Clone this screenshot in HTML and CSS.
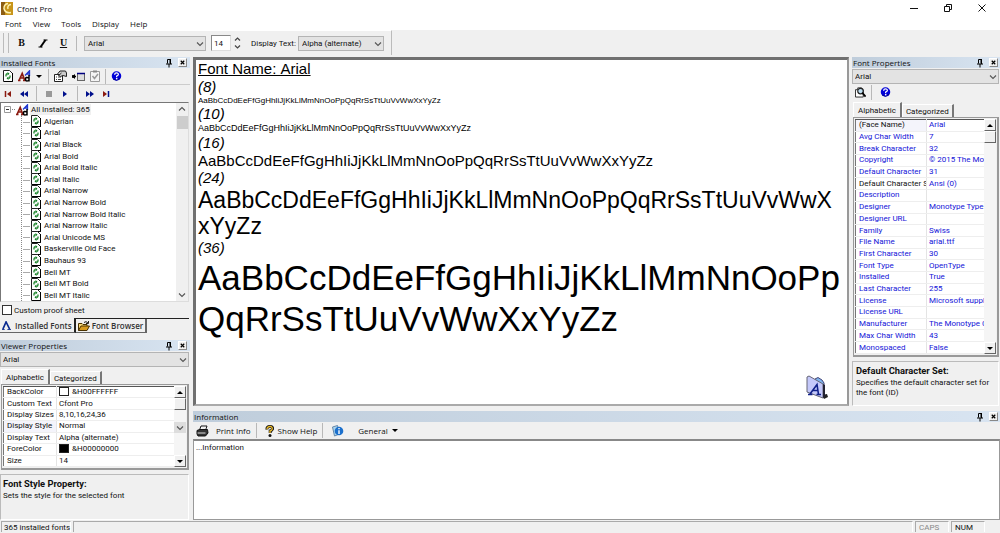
FILE: index.html
```html
<!DOCTYPE html>
<html lang="en">
<head>
<meta charset="utf-8">
<title>Cfont Pro</title>
<link rel="stylesheet" href="styles.css">
</head>
<body>
<svg class="defs" aria-hidden="true">
  <symbol id="chev" viewBox="0 0 8 8"><path d="M1 2.5L4 5.5L7 2.5" fill="none" stroke="#555" stroke-width="1.1"/></symbol>
  <symbol id="pin" viewBox="0 0 6 10"><path d="M1.5 5.500V1.500H4V5.500M0 6H6M3 6V9.500M4.500 1V6" fill="none" stroke="#000"/></symbol>
  <symbol id="x" viewBox="0 0 8 8"><path d="M2 2L6 6M6 2L2 6" stroke="#000" stroke-width="1.4"/></symbol>
  <symbol id="doc" viewBox="0 0 10 12"><path d="M.5.5H6.500L9.500 3.500V11.500H.5Z" fill="#fff" stroke="#222"/><path d="M9.500 3V11.500H1" fill="none" stroke="#000"/><path d="M3 6.500V5Q3 3.700 4.500 3.700M7 5.500V7Q7 8.300 5.500 8.300" fill="none" stroke="#087a18" stroke-width="1.200"/><path d="M4.500 2V5.400L6.500 3.700ZM5.500 6.600V10L3.500 8.300Z" fill="#087a18"/></symbol>
  <symbol id="aaa" viewBox="0 0 13 12"><path d="M1 10.500L4.200 3.500L6.800 10.500M2.500 8H6M0 10.500H2.500M5 10.500H8" fill="none" stroke="#8b1a10" stroke-width="1.700"/><path d="M7 5.500L11.500.8V6M8.500 4H11.500" fill="none" stroke="#2038d0" stroke-width="1.300"/><path d="M11 5V11.500M11 8Q7.500 6.500 7.500 9.300Q7.500 12 11 10.300" fill="none" stroke="#000" stroke-width="1.500"/></symbol>
  <symbol id="help" viewBox="0 0 12 12"><circle cx="6" cy="6" r="5.200" fill="#0000d8"/><path d="M2.500 9.500Q6 12 10 8.500" fill="none" stroke="#000080"/><path d="M4 4.500Q4 2.700 6 2.700Q8.200 2.700 8 4.400Q7.900 5.500 6.200 6V7.300" fill="none" stroke="#fff" stroke-width="1.400"/><rect x="5.400" y="8.200" width="1.600" height="1.500" fill="#fff"/></symbol>
  <symbol id="props" viewBox="0 0 13 12"><path d="M.5 4.500H8.500V11.500H.5Z" fill="#fff" stroke="#222"/><path d="M2 7H3M4 7H7M2 9.500H3M4 9.500H7" stroke="#444"/><path d="M3.500 4L6 1H11.500L12.500 3V6.500L9 5.500L6.500 6.500L4.500 5.500L7.500 3" fill="#ccc" stroke="#222"/></symbol>
  <symbol id="ins" viewBox="0 0 13 10"><path d="M0 5.500H4M1 4V7" fill="none" stroke="#000" stroke-width="1.600"/><path d="M0 5.500L3 3V8Z" fill="#000"/><rect x="5.500" y="2.500" width="7" height="7" fill="#ddd" stroke="#666"/><path d="M5 2.500H13" stroke="#000080" stroke-width="1.500"/></symbol>
  <symbol id="clip" viewBox="0 0 10 12"><path d="M.5 1.500H9.500V11.500H.5Z" fill="#f4f4f4" stroke="#999"/><path d="M3 1.500H7" stroke="#888" stroke-width="2"/><path d="M2.500 6L4.500 8.500L8 4" fill="none" stroke="#999" stroke-width="1.500"/></symbol>
  <symbol id="scan" viewBox="0 0 12 12"><path d="M.5 3.500H3V1.500H7L9 3.500V11.500H.5Z" fill="#fff" stroke="#222"/><circle cx="6" cy="5" r="3" fill="#bfe0f4" stroke="#222" stroke-width="1.300"/><path d="M8 7L11.500 11" stroke="#000" stroke-width="1.800"/></symbol>
</svg>

<div class="app">
  <header class="title">
    <svg class="logo" viewBox="0 0 12 13"><rect width="12" height="13" fill="#c8951a"/><path d="M0 0H4V13H0Z" fill="#8d5d12"/><path d="M7 1.500Q3 2 3 6.500Q4 11.500 10 10.500M10 2.500Q6 3 7 7" fill="none" stroke="#fff3b0" stroke-width="1.500"/></svg>
    <h1>Cfont Pro</h1>
    <div class="winbtns">
      <button aria-label="Minimize"><svg viewBox="0 0 8 8"><path d="M0 4.500H8" stroke="#111"/></svg></button>
      <button aria-label="Restore"><svg viewBox="0 0 8 8"><path d="M.5 2.500H5.500V7.500H.5ZM2.500 2V.5H7.500V5.500H6" fill="none" stroke="#111"/></svg></button>
      <button aria-label="Close"><svg viewBox="0 0 8 8"><path d="M.5.5L7.500 7.500M7.500.5L.5 7.500" stroke="#111"/></svg></button>
    </div>
  </header>
  <nav class="menu"><button>Font</button><button>View</button><button>Tools</button><button>Display</button><button>Help</button></nav>

  <div class="toolrow">
    <div class="toolbar">
      <span class="grip"></span>
      <div class="fmt"><button class="b">B</button><button class="i" aria-label="Italic"><svg viewBox="0 0 10 9"><path d="M7.500 1L2.500 8" stroke="#000" stroke-width="2"/><path d="M5.500 1H9.500M.5 8H4.500" stroke="#000" stroke-width="1"/></svg></button><button class="u">U</button></div>
      <span class="sep"></span>
      <span class="combo font-combo"><select aria-label="Font"><option>Arial</option></select><svg><use href="#chev"/></svg></span>
      <input class="size" aria-label="Size" value="14">
      <span class="spin"><svg viewBox="0 0 8 16"><path d="M1.500 5.500L4 3L6.500 5.500M1.500 10.500L4 13L6.500 10.500" fill="none" stroke="#444" stroke-width="1.200"/></svg></span>
      <label for="dt">Display Text:</label>
      <span class="combo text-combo"><select id="dt"><option>Alpha (alternate)</option></select><svg><use href="#chev"/></svg></span>
    </div>
  </div>

  <main class="work">
    <aside class="left">
      <section class="fonts">
        <div class="cap"><h2>Installed Fonts</h2><svg class="pin"><use href="#pin"/></svg><button class="close" aria-label="Close"><svg><use href="#x"/></svg></button></div>
        <div class="tools">
          <button aria-label="Refresh"><svg class="i10"><use href="#doc"/></svg></button>
          <button aria-label="Fonts"><svg class="i13"><use href="#aaa"/></svg></button>
          <span class="down"></span><span class="sep"></span>
          <button aria-label="Properties"><svg class="i13"><use href="#props"/></svg></button>
          <button aria-label="Insert"><svg class="i13"><use href="#ins"/></svg></button>
          <button aria-label="Check"><svg class="i10"><use href="#clip"/></svg></button>
          <span class="sep"></span>
          <button aria-label="Help"><svg class="i11"><use href="#help"/></svg></button>
        </div>
        <div class="tools nav">
          <button aria-label="First"><svg viewBox="0 0 8 8"><path d="M1.500 1V7" stroke="#8b1a10" stroke-width="1.500"/><path d="M7 1V7L3 4Z" fill="#8b1a10"/></svg></button>
          <button aria-label="Back"><svg viewBox="0 0 8 8"><path d="M4 1V7L0 4ZM8 1V7L4 4Z" fill="#00108c"/></svg></button>
          <span class="sep"></span>
          <button aria-label="Stop"><svg viewBox="0 0 8 8"><path d="M1 1H7V7H1Z" fill="#999"/></svg></button>
          <button aria-label="Play"><svg viewBox="0 0 8 8"><path d="M2 1V7L6 4Z" fill="#00108c"/></svg></button>
          <span class="sep"></span>
          <button aria-label="Forward"><svg viewBox="0 0 8 8"><path d="M0 1V7L4 4ZM4 1V7L8 4Z" fill="#00108c"/></svg></button>
          <button aria-label="Last"><svg viewBox="0 0 8 8"><path d="M6.500 1V7" stroke="#00108c" stroke-width="1.500"/><path d="M1 1V7L5 4Z" fill="#8b1a10"/></svg></button>
        </div>
        <div class="treebox">
          <ul class="tree">
            <li class="root"><svg class="box" viewBox="0 0 7 7"><path d="M.5.5H6.500V6.500H.5Z" fill="#fff" stroke="#999"/><path d="M2 3.500H5" stroke="#333"/></svg><i></i><svg class="i13"><use href="#aaa"/></svg><span>All Installed: 365</span></li>
            <li><svg class="i10"><use href="#doc"/></svg>Algerian</li>
            <li><svg class="i10"><use href="#doc"/></svg>Arial</li>
            <li><svg class="i10"><use href="#doc"/></svg>Arial Black</li>
            <li><svg class="i10"><use href="#doc"/></svg>Arial Bold</li>
            <li><svg class="i10"><use href="#doc"/></svg>Arial Bold Italic</li>
            <li><svg class="i10"><use href="#doc"/></svg>Arial Italic</li>
            <li><svg class="i10"><use href="#doc"/></svg>Arial Narrow</li>
            <li><svg class="i10"><use href="#doc"/></svg>Arial Narrow Bold</li>
            <li><svg class="i10"><use href="#doc"/></svg>Arial Narrow Bold Italic</li>
            <li><svg class="i10"><use href="#doc"/></svg>Arial Narrow Italic</li>
            <li><svg class="i10"><use href="#doc"/></svg>Arial Unicode MS</li>
            <li><svg class="i10"><use href="#doc"/></svg>Baskerville Old Face</li>
            <li><svg class="i10"><use href="#doc"/></svg>Bauhaus 93</li>
            <li><svg class="i10"><use href="#doc"/></svg>Bell MT</li>
            <li><svg class="i10"><use href="#doc"/></svg>Bell MT Bold</li>
            <li><svg class="i10"><use href="#doc"/></svg>Bell MT Italic</li>
          </ul>
          <div class="flatbar"><svg class="flip"><use href="#chev"/></svg><span></span><svg><use href="#chev"/></svg></div>
        </div>
        <label class="check"><input type="checkbox">Custom proof sheet</label>
        <div class="pages">
          <button class="on"><svg viewBox="0 0 10 10"><path d="M1 9L4.500 1L8.500 9" fill="none" stroke="#0a2a90" stroke-width="1.800"/><path d="M0 9.500H3M6 9.500H10" stroke="#0a2a90"/></svg>Installed Fonts</button>
          <button><svg class="folder" viewBox="0 0 12 10"><path d="M.5 9.500V2.500H4L5 3.500H9V5" fill="#f8d878" stroke="#4a3200"/><path d="M.5 9.500L3 5H11.500L9 9.500Z" fill="#d89c20" stroke="#4a3200"/><path d="M6 1.500Q8-.5 10 2M10.500 0V2.500H8" fill="none" stroke="#222"/></svg>Font Browser</button>
        </div>
      </section>

      <section class="viewer">
        <div class="cap"><h2>Viewer Properties</h2><svg class="pin"><use href="#pin"/></svg><button class="close" aria-label="Close"><svg><use href="#x"/></svg></button></div>
        <span class="combo wide"><select aria-label="Font"><option>Arial</option></select><svg><use href="#chev"/></svg></span>
        <div class="tabs"><button class="on">Alphabetic</button><button>Categorized</button></div>
        <div class="gridbox">
          <div class="cells"><table class="props short">
            <tr><th>BackColor</th><td><b class="sw white"></b>&amp;H00FFFFFF</td></tr>
            <tr><th>Custom Text</th><td>Cfont Pro</td></tr>
            <tr><th>Display Sizes</th><td>8,10,16,24,36</td></tr>
            <tr class="sel"><th>Display Style</th><td>Normal</td></tr>
            <tr><th>Display Text</th><td>Alpha (alternate)</td></tr>
            <tr><th>ForeColor</th><td><b class="sw black"></b>&amp;H00000000</td></tr>
            <tr><th>Size</th><td>14</td></tr>
          </table></div>
          <div class="bar"><span class="up"></span><span class="thumb"></span><button class="drop" aria-label="Open list"><svg><use href="#chev"/></svg></button><span class="dn"></span></div>
        </div>
        <div class="desc"><h3>Font Style Property:</h3><p>Sets the style for the selected font</p></div>
      </section>
    </aside>

    <section class="sample">
      <h2>Font Name: Arial</h2>
      <h3>(8)</h3><p class="s8">AaBbCcDdEeFfGgHhIiJjKkLlMmNnOoPpQqRrSsTtUuVvWwXxYyZz</p>
      <h3>(10)</h3><p class="s10">AaBbCcDdEeFfGgHhIiJjKkLlMmNnOoPpQqRrSsTtUuVvWwXxYyZz</p>
      <h3>(16)</h3><p class="s16">AaBbCcDdEeFfGgHhIiJjKkLlMmNnOoPpQqRrSsTtUuVvWwXxYyZz</p>
      <h3>(24)</h3><p class="s24">AaBbCcDdEeFfGgHhIiJjKkLlMmNnOoPpQqRrSsTtUuVvWwXxYyZz</p>
      <h3>(36)</h3><p class="s36">AaBbCcDdEeFfGgHhIiJjKkLlMmNnOoPpQqRrSsTtUuVvWwXxYyZz</p>
      <svg class="badge" viewBox="0 0 24 26"><path d="M17 20L22 19L23 22L19 24Z" fill="#222"/><path d="M10 4L13 2.500L17 5L19 8V22L10 18Z" fill="#7eb4ee" stroke="#447"/><path d="M2 2L4 1L18 9V23L2 17Z" fill="#c4c8fa" stroke="#667"/><path d="M18 9V23L20 22V10Z" fill="#223"/><path d="M5 19L12 9.500L13.500 19.500M7.500 15.500H13M3 19.500H7.500M11.500 19.500H16" fill="none" stroke="#10208a" stroke-width="1.600"/></svg>
    </section>

    <aside class="right">
      <div class="cap"><h2>Font Properties</h2><svg class="pin"><use href="#pin"/></svg><button class="close" aria-label="Close"><svg><use href="#x"/></svg></button></div>
      <span class="combo wide"><select aria-label="Font"><option>Arial</option></select><svg><use href="#chev"/></svg></span>
      <div class="tools"><button aria-label="Scan"><svg class="i11"><use href="#scan"/></svg></button><span class="sep"></span><button aria-label="Help"><svg class="i11"><use href="#help"/></svg></button></div>
      <div class="tabs"><button class="on">Alphabetic</button><button>Categorized</button></div>
      <div class="gridbox">
        <div class="cells"><table class="props blue">
          <tr class="sel"><th class="k">(Face Name)</th><td>Arial</td></tr>
          <tr><th>Avg Char Width</th><td>7</td></tr>
          <tr><th>Break Character</th><td>32</td></tr>
          <tr><th>Copyright</th><td>© 2015 The Mo</td></tr>
          <tr><th>Default Character</th><td>31</td></tr>
          <tr><th class="k">Default Character S</th><td>Ansi (0)</td></tr>
          <tr><th>Description</th><td></td></tr>
          <tr><th>Designer</th><td>Monotype Type</td></tr>
          <tr><th>Designer URL</th><td></td></tr>
          <tr><th>Family</th><td>Swiss</td></tr>
          <tr><th>File Name</th><td>arial.ttf</td></tr>
          <tr><th>First Character</th><td>30</td></tr>
          <tr><th>Font Type</th><td>OpenType</td></tr>
          <tr><th>Installed</th><td>True</td></tr>
          <tr><th>Last Character</th><td>255</td></tr>
          <tr><th>License</th><td>Microsoft suppli</td></tr>
          <tr><th>License URL</th><td></td></tr>
          <tr><th>Manufacturer</th><td>The Monotype C</td></tr>
          <tr><th>Max Char Width</th><td>43</td></tr>
          <tr><th>Monospaced</th><td>False</td></tr>
        </table></div>
        <div class="bar"><span class="up"></span><span class="thumb"></span><span class="dn"></span></div>
      </div>
      <div class="desc"><h3>Default Character Set:</h3><p>Specifies the default character set for<br>the font (ID)</p></div>
    </aside>

    <section class="info">
      <div class="cap"><h2>Information</h2><svg class="pin"><use href="#pin"/></svg><button class="close" aria-label="Close"><svg><use href="#x"/></svg></button></div>
      <div class="infobar">
        <button><svg viewBox="0 0 12 12"><path d="M3 5L4.500 1H10.500L9 5" fill="#fff" stroke="#111"/><path d="M.5 5.500L3 4.500H11L11.500 8L9 11H1.500L.5 9Z" fill="#333" stroke="#111"/><path d="M1 8H9M5 3H9" stroke="#ddd"/></svg>Print Info</button><span class="sep"></span>
        <button class="sh"><svg class="q" viewBox="0 0 10 12"><path d="M2 4.500Q1.500 1.500 5 1.500Q8 1.500 7.500 4Q7 5.500 5.200 6V8" fill="none" stroke="#111" stroke-width="3"/><path d="M2 4.200Q2 1.500 5 1.500Q7.500 1.500 7.200 4Q7 5.500 5 6V8" fill="none" stroke="#e8b828" stroke-width="1.400"/><circle cx="5" cy="10.500" r="1.500" fill="#111"/></svg>Show Help</button><span class="sep"></span>
        <button aria-label="About"><svg viewBox="0 0 12 12"><path d="M1 2L6 .5L8 9L3 11Z" fill="#a8d4ee" stroke="#68a"/><circle cx="7.500" cy="6" r="4.300" fill="#1c70cc"/><path d="M7.500 3V4.200M7.500 5.200V9" stroke="#fff" stroke-width="1.400"/></svg></button>
        <button class="gen">General<span class="down"></span></button>
      </div>
      <textarea aria-label="Information">...Information</textarea>
    </section>
  </main>

  <footer class="status"><span class="count">365 installed fonts</span><span class="fill"></span><span class="key off">CAPS</span><span class="key">NUM</span><span class="end"></span></footer>
</div>
</body>
</html>
```
FILE: styles.css
```css
* { box-sizing: border-box; }
body { margin: 0; background: #f0f0f0; color: #111; font: 8px/11px Roboto, sans-serif; }
h1, h2, h3, p, ul { margin: 0; padding: 0; font-weight: normal; }
button, select, input, textarea { font: inherit; color: inherit; margin: 0; padding: 0; border: 0; border-radius: 0; background: none; outline: 0; }
svg { display: block; flex: none; width: 8px; height: 8px; }
.defs { position: absolute; width: 0; height: 0; }
.app { display: flex; flex-direction: column; height: 100vh; min-height: 500px; overflow: hidden; }

.title { display: flex; align-items: center; gap: 4px; height: 16px; padding-left: 1px; background: #fff; }
.title h1, .menu, .cap h2, .infobar, .pages { font-family: "Open Sans", sans-serif; }
.title h1 { flex: 1; font-size: 8px; }
.logo { width: 12px; height: 13px; }
.winbtns { display: flex; gap: 26px; padding-right: 14px; }
.menu { display: flex; align-items: flex-start; gap: 11px; height: 14px; padding-left: 5px; background: #fff; }
.menu button { height: 14px; }

.toolrow { height: 26px; }
.toolbar { display: flex; align-items: center; width: 392px; height: 25px; border-right: 1px solid #bbb; border-top: 1px solid #fff; }
.grip { width: 6px; height: 20px; margin-left: 3px; border: 1px solid #bbb; border-width: 0 1px; }
.fmt { display: flex; gap: 12px; margin-left: 8px; font: bold 10px/12px "Liberation Serif", serif; }
.fmt button { width: 9px; height: 12px; }
.fmt svg { width: 10px; height: 9px; margin-top: 1px; }
.u { text-decoration: underline; }
.sep { flex: none; width: 1px; height: 15px; background: #b8b8b8; }
.toolbar .sep { margin: 0 7px 0 8px; }
.combo { position: relative; display: block; height: 15px; }
.combo select { display: block; width: 100%; height: 100%; padding-left: 2px; appearance: none; background: #e3e3e3; border: 1px solid #b4b4b4; }
.combo svg { position: absolute; right: 2px; top: 4px; pointer-events: none; }
.font-combo { width: 122px; }
.toolbar select { padding-left: 3px; }
.size { width: 20px; height: 16px; margin-left: 5px; padding-left: 2px; background: #fff; border: 1px solid #888; border-right-color: #ddd; border-bottom-color: #ddd; }
.spin svg { width: 9px; height: 16px; }
.spin { margin: 0 9px 0 2px; }
.toolbar label { width: 47px; white-space: nowrap; }
.text-combo { width: 86px; }

.work { flex: 1; min-height: 0; display: grid; grid-template: minmax(0, 1fr) 109px / 190px minmax(0, 1fr) 148px; gap: 5px 3px; padding-top: 1px; }
.left { grid-row: 1 / 3; display: flex; flex-direction: column; min-height: 0; gap: 6px; }
.fonts { flex: 1; min-height: 0; display: flex; flex-direction: column; }
.cap { display: flex; align-items: center; height: 11px; padding-right: 2px; padding-left: 1px; background: linear-gradient(90deg, #bfcddb, #d8e4f1); }
.cap h2 { flex: 1; font-size: 8px; color: #111; }
.pin { width: 6px; height: 10px; margin-right: 6px; }
.close { width: 9px; height: 9px; background: #f0f0f0; border: 1px solid #fff; border-right-color: #888; border-bottom-color: #888; }
.left .close, .left .pin { margin-right: 1px; }
.left .pin { margin-right: 6px; }
.close svg { width: 7px; height: 7px; }
.tools { display: flex; align-items: center; gap: 6px; height: 17px; padding-left: 3px; border-bottom: 1px solid #ccc; }
.i10 { width: 10px; height: 12px; }
.i11 { width: 11px; height: 12px; }
.i13 { width: 13px; height: 12px; }
.down { display: block; width: 0; border: 3px solid transparent; border-top-color: #000; border-bottom: 0; }
.fonts .tools { gap: 5px; }
.fonts .tools .down { margin-right: 1px; }
.nav.tools { gap: 8px; padding-left: 4px; border-bottom: 0; }
.treebox { flex: 1; min-height: 0; display: flex; margin-right: 1px; background: #fff; border: 1px solid #777; border-right-color: #ddd; border-bottom-color: #ddd; }
.tree { flex: 1; display: grid; grid-auto-rows: 1fr; list-style: none; overflow: hidden; position: relative; padding-top: 1px; }
.tree::before { content: ""; position: absolute; left: 20px; top: 12px; bottom: 0; border-left: 1px dotted #888; }
.tree li { display: flex; align-items: center; gap: 3px; min-height: 0; padding-left: 30px; white-space: nowrap; background: linear-gradient(#aaa, #aaa) 22px 6px / 7px 1px no-repeat; }
.tree li.root { padding-left: 3px; gap: 1px; background: none; }
.root i { width: 3px; border-top: 1px dotted #888; }
.root span { padding: 0 1px; background: #f0f0f0; }
.box { width: 7px; height: 7px; }
.flatbar { width: 12px; display: flex; flex-direction: column; align-items: center; background: #f0f0f0; padding: 2px 0; }
.flatbar span { width: 11px; height: 13px; margin-top: 3px; background: #cdcdcd; }
.flatbar svg:last-child { margin-top: auto; }
.flip { transform: rotate(180deg); }
.check { display: flex; align-items: center; gap: 2px; height: 16px; padding-left: 2px; }
.check input { appearance: none; width: 10px; height: 10px; background: #fff; border: 1px solid #333; }
.pages { display: flex; height: 16px; font-weight: 600; color: #333; border-top: 1px solid #222; margin-right: 1px; }
.pages button { display: flex; align-items: center; gap: 4px; height: 14px; padding: 0 2px; border-right: 2px solid #666; border-bottom: 1px solid #666; white-space: nowrap; }
.pages .on { height: 15px; margin-top: -1px; background: #f0f0f0; border-right-color: #222; }
.pages svg { width: 9px; height: 9px; }
.pages .folder { width: 12px; height: 10px; margin-right: -2px; }

.wide { margin: 1px 1px 0 0; }
.tabs { display: flex; height: 17px; align-items: flex-end; padding-left: 1px; }
.tabs button { height: 13px; padding: 0 3px; border: 1px solid #fff; border-right: 2px solid #777; border-bottom: 0; }
.tabs .on { height: 15px; padding: 0 4px; }
.gridbox { display: flex; margin-right: 1px; padding: 1px; border: 2px solid #999; border-width: 1px 2px 2px 1px; margin-left: 1px; }
.viewer .gridbox { height: 86px; }
.cells { flex: 1; min-width: 0; display: grid; }
.props { width: 100%; border-collapse: collapse; table-layout: fixed; background: #fff; border-top: 1px solid #555; border-left: 1px solid #777; }
.props th, .props td { padding: 0 0 0 3px; text-align: left; font-weight: normal; white-space: nowrap; overflow: hidden; border-bottom: 1px solid #eee; line-height: 10px; }
.props td { border-left: 1px solid #e4e4e4; padding-left: 2px; }
.props th { width: 53px; }
.blue th { width: 71px; }
.blue { color: #1414d8; }
.blue .k { color: #111; }
.sel th { background: #f4f4fb; }
.sw { display: inline-block; width: 10px; height: 9px; margin-right: 3px; vertical-align: top; border: 1px solid #222; }
.black { background: #000; }
.bar { position: relative; flex: none; width: 12px; display: flex; flex-direction: column; background: #f5f5f5; }
.bar span { display: flex; align-items: center; justify-content: center; height: 12px; background: #f0f0f0; border: 1px solid #fff; border-right-color: #666; border-bottom-color: #666; }
.bar .up::before, .bar .dn::before { content: ""; border: 3px solid transparent; border-top: 0; border-bottom-color: #000; }
.bar .dn::before { border-top: 3px solid #000; border-bottom: 0; }
.bar .dn { margin-top: auto; }
.drop { position: absolute; left: 0; top: 36px; width: 12px; height: 11px; background: #ddd; display: flex; align-items: center; justify-content: center; }
.desc { padding: 3px 2px; border: 1px solid #bbb; border-right-color: #fff; border-bottom-color: #fff; margin: 4px 1px 0 0; }
.desc h3 { font-weight: bold; margin-bottom: 2px; }
.desc p { line-height: 10px; }
.viewer .desc { height: 46px; }

.sample { position: relative; min-width: 0; overflow: hidden; padding: 0 6px 0 2px; background: #fff; border: 3px solid #707070; border-right: 2px solid #999; border-bottom: 2px solid #aaa; font: 15px/18px "Liberation Sans", Arial, sans-serif; color: #000; font-kerning: none; }
.sample h2, .sample h3 { font-size: 15px; }
.sample h2 { text-decoration: underline; }
.sample h3 { font-style: italic; }
.sample p { word-break: break-all; }
.sample .s8 { font-size: 8px; line-height: 9px; }
.sample .s10 { font-size: 9px; line-height: 11px; }
.sample .s16 { font-size: 15px; line-height: 17px; }
.sample .s24 { font-size: 23px; line-height: 26px; }
.sample .s36 { font-size: 35px; line-height: 41px; }
.badge { position: absolute; right: 18px; bottom: 3px; width: 24px; height: 26px; }

.right { display: flex; flex-direction: column; min-height: 0; }
.right .tools { gap: 5px; padding-left: 3px; height: 16px; border-bottom: 0; }
.right .gridbox { flex: 1; min-height: 0; }
.right .desc { height: 45px; padding-left: 3px; }
.right .sep { margin-right: 3px; }

.info { grid-column: 2 / 4; display: flex; flex-direction: column; min-height: 0; }
.infobar { display: flex; align-items: center; height: 17px; padding-left: 3px; }
.infobar button { display: flex; align-items: center; gap: 7px; }
.infobar svg { width: 13px; height: 12px; }
.infobar .q { width: 10px; }
.infobar .sh { gap: 3px; }
.infobar .sep { margin: 0 8px 0 5px; }
.infobar .gen { margin-left: 14px; gap: 4px; }
textarea { flex: 1; display: block; width: 100%; padding: 1px 2px; resize: none; background: #fff; border: 1px solid #999; border-top: 2px solid #888; }

.status { display: flex; height: 13px; padding: 1px; gap: 2px; }
.status span { padding: 0 2px; border: 1px solid #aaa; border-right-color: #fff; border-bottom: 0; line-height: 11px; }
.status .count { width: 70px; white-space: nowrap; }
.status .fill { flex: 1; }
.status .key { width: 34px; padding-left: 3px; }
.status .off { color: #888; }
.status .end { width: 12px; border: 0; }
```
